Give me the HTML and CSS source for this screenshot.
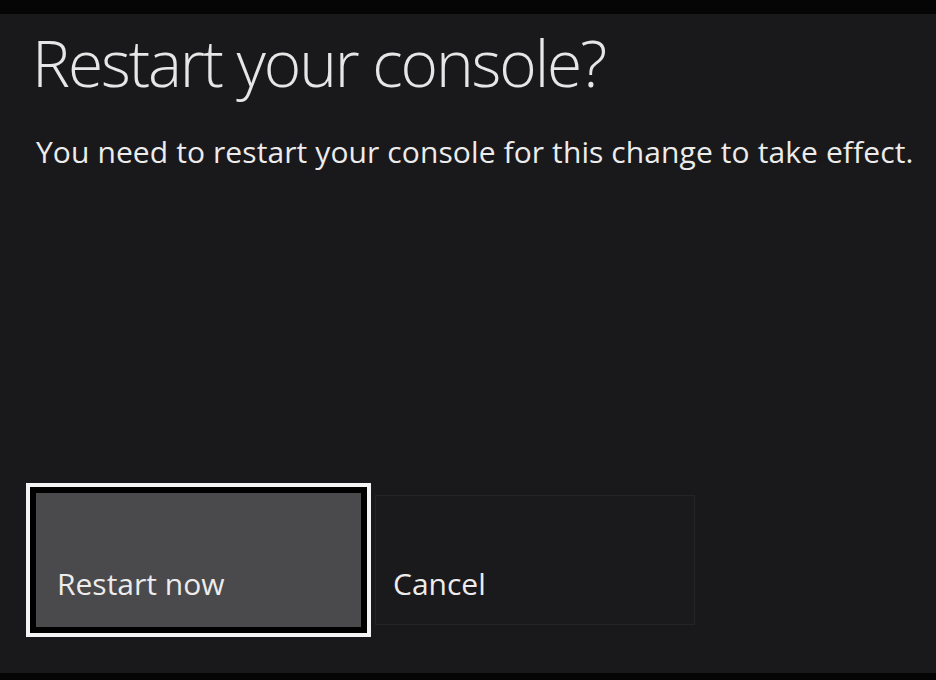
FILE: index.html
```html
<!DOCTYPE html>
<html lang="en">
<head>
  <meta charset="UTF-8">
  <meta name="viewport" content="width=device-width, initial-scale=1.0">
  <title>Restart your console?</title>
  <link rel="stylesheet" href="styles.css">
</head>
<body>
  <div class="top-bar"></div>
  <div class="dialog">
    <div class="dialog-text">
      <h1>Restart your console?</h1>
      <p>You need to restart your console for this change to take effect.</p>
    </div>
    <div class="actions">
      <div class="focus-ring">
        <button class="btn btn-primary">Restart now</button>
      </div>
      <button class="btn btn-secondary">Cancel</button>
    </div>
  </div>
  <div class="bottom-bar"></div>
</body>
</html>
```

FILE: styles.css
```css
html, body {
  height: 100%;
}
body {
  margin: 0;
  background-color: #050505;
  font-family: "Open Sans", "Noto Sans", sans-serif;
  color: #ececec;
  display: flex;
  flex-direction: column;
  overflow: hidden;
}
.top-bar {
  height: 14px;
  background-color: #050505;
}
.bottom-bar {
  height: 7px;
  background-color: #050505;
}
.dialog {
  flex: 1;
  background-color: #19181a;
  display: flex;
  flex-direction: column;
  padding: 0 0 36px 26px;
}
.dialog-text {
  padding-left: 6px;
}
.dialog-text h1 {
  margin: 9px 0 0;
  font-size: 64px;
  line-height: 80px;
  font-weight: 300;
  letter-spacing: -2.1px;
  color: #e6e6e6;
}
.dialog-text p {
  margin: 29px 0 0 4px;
  font-size: 30px;
  line-height: 40px;
  font-weight: 400;
  letter-spacing: 0.1px;
  color: #ececec;
}
.actions {
  margin-top: auto;
  display: flex;
  align-items: center;
  gap: 4px;
}
.focus-ring {
  border: 4px solid #f4f4f4;
  background-color: #000;
  padding: 6px;
}
.btn {
  display: flex;
  align-items: flex-end;
  font-family: inherit;
  font-size: 30px;
  color: #ececec;
  text-align: left;
  cursor: pointer;
  box-sizing: border-box;
}
.btn-primary {
  width: 325px;
  height: 134px;
  padding: 0 0 23px 21px;
  background-color: #4a494b;
  border: none;
}
.btn-secondary {
  width: 320px;
  height: 130px;
  padding: 0 0 20px 17px;
  background-color: #1a191c;
  border: 1px solid #242326;
}
```
